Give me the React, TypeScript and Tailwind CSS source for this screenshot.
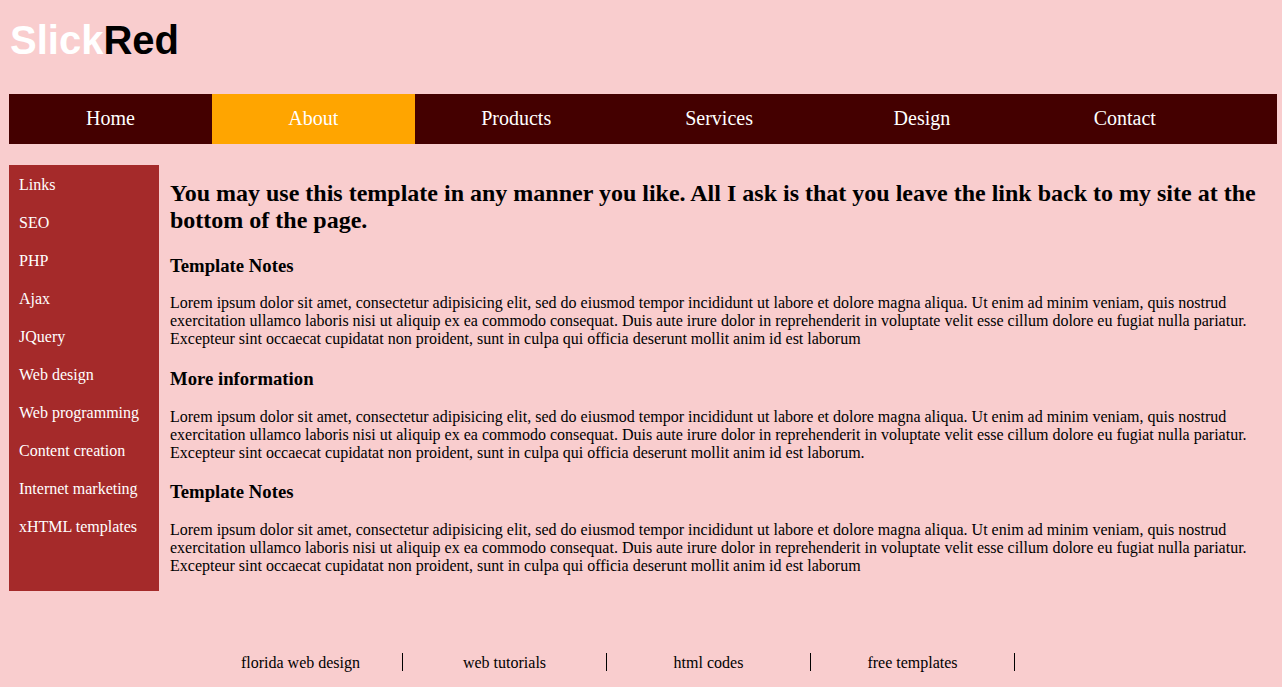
import React from "react";

const lorem =
  "Lorem ipsum dolor sit amet, consectetur adipisicing elit, sed do eiusmod tempor incididunt ut labore et dolore magna aliqua. Ut enim ad minim veniam, quis nostrud exercitation ullamco laboris nisi ut aliquip ex ea commodo consequat. Duis aute irure dolor in reprehenderit in voluptate velit esse cillum dolore eu fugiat nulla pariatur. Excepteur sint occaecat cupidatat non proident, sunt in culpa qui officia deserunt mollit anim id est laborum";
const loremDot = lorem + ".";

const nav = ["Home", "About", "Products", "Services", "Design", "Contact"];
const side = [
  "Links",
  "SEO",
  "PHP",
  "Ajax",
  "JQuery",
  "Web design",
  "Web programming",
  "Content creation",
  "Internet marketing",
  "xHTML templates",
];
const foot = ["florida web design", "web tutorials", "html codes", "free templates"];

export default function App() {
  return (
    <div className="min-h-[687px] bg-[#f9cdce] pl-[9px] pr-[5px] font-['Liberation_Serif',serif] text-black">
      <header className="h-[94px] pt-[17px] pl-[1px]">
        <h1 className="font-['Liberation_Sans',Arial,sans-serif] text-[40px] font-bold leading-[46px]">
          <span className="text-white">Slick</span>
          <span className="text-black">Red</span>
        </h1>
      </header>
      <nav className="flex h-[50px] bg-[#440000]">
        {nav.map((n) => (
          <a
            key={n}
            className={`block h-[50px] w-[16%] text-center text-[20px] leading-[48px] text-white ${
              n === "About" ? "bg-[#ffa500]" : ""
            }`}
          >
            {n}
          </a>
        ))}
      </nav>
      <div className="mt-[21px] flex items-start">
        <ul className="h-[426px] w-[150px] shrink-0 bg-[#a52a2a]">
          {side.map((s) => (
            <li key={s} className="h-[38px] pl-[10px] text-[16px] leading-[39px] text-white">
              {s}
            </li>
          ))}
        </ul>
        <main className="flex-1 pl-[11px] pr-[12px]">
          <h2 className="mt-[15px] text-[24px] font-bold leading-[27px]">
            You may use this template in any manner you like. All I ask is that you leave the link back to my site at
            the bottom of the page.
          </h2>
          <h3 className="mt-[21px] text-[18.72px] font-bold leading-[22px]">Template Notes</h3>
          <p className="mt-[17px] text-[16px] leading-[18px]">{lorem}</p>
          <h3 className="mt-[20px] text-[18.72px] font-bold leading-[22px]">More information</h3>
          <p className="mt-[18px] text-[16px] leading-[18px]">{loremDot}</p>
          <h3 className="mt-[19px] text-[18.72px] font-bold leading-[22px]">Template Notes</h3>
          <p className="mt-[18px] text-[16px] leading-[18px]">{lorem}</p>
        </main>
      </div>
      <footer className="mt-[62px] flex pl-[190px]">
        {foot.map((f) => (
          <div key={f} className="h-[18px] w-[204px] border-r border-black text-center text-[16px] leading-[20px]">
            {f}
          </div>
        ))}
      </footer>
    </div>
  );
}
